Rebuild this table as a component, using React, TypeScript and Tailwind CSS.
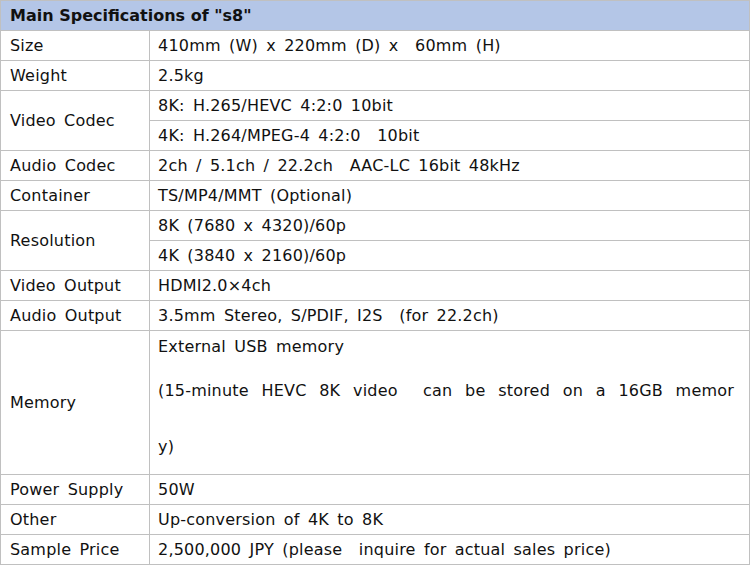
import React from "react";

type Spec = { label: string; values: React.ReactNode[] };

const specs: Spec[] = [
  { label: "Size", values: ["410mm (W) x 220mm (D) x  60mm (H)"] },
  { label: "Weight", values: ["2.5kg"] },
  {
    label: "Video Codec",
    values: ["8K: H.265/HEVC 4:2:0 10bit", "4K: H.264/MPEG-4 4:2:0  10bit"],
  },
  { label: "Audio Codec", values: ["2ch / 5.1ch / 22.2ch  AAC-LC 16bit 48kHz"] },
  { label: "Container", values: ["TS/MP4/MMT (Optional)"] },
  {
    label: "Resolution",
    values: ["8K (7680 x 4320)/60p", "4K (3840 x 2160)/60p"],
  },
  { label: "Video Output", values: ["HDMI2.0×4ch"] },
  { label: "Audio Output", values: ["3.5mm Stereo, S/PDIF, I2S  (for 22.2ch)"] },
];

const specsAfter: Spec[] = [
  { label: "Power Supply", values: ["50W"] },
  { label: "Other", values: ["Up-conversion of 4K to 8K"] },
  {
    label: "Sample Price",
    values: ["2,500,000 JPY (please  inquire for actual sales price)"],
  },
];

const Row = ({ spec }: { spec: Spec }) => (
  <div className="flex">
    <div className="w-[149px] shrink-0 flex items-center pl-[9px] border-r border-b border-[#c0c0c0]">
      {spec.label}
    </div>
    <div className="flex-1 flex flex-col">
      {spec.values.map((v, i) => (
        <div
          key={i}
          className="h-[30px] flex items-center pl-[8px] border-r border-b border-[#c0c0c0]"
        >
          {v}
        </div>
      ))}
    </div>
  </div>
);

export default function App() {
  return (
    <div className="bg-white w-[751px] h-[566px]">
      <div
        className="w-[750px] border-l border-t border-[#c0c0c0] text-[16px] text-[#111] whitespace-pre-wrap tracking-[0.2px] [word-spacing:3px]"
        style={{ fontFamily: '"DejaVu Sans", Verdana, sans-serif' }}
      >
        <div className="h-[30px] flex items-center pl-[9px] bg-[#b4c6e7] font-bold border-r border-b border-[#c0c0c0] tracking-normal [word-spacing:0px]">
          Main Specifications of "s8"
        </div>
        {specs.map((s) => (
          <Row key={s.label} spec={s} />
        ))}
        <div className="flex">
          <div className="w-[149px] shrink-0 flex items-center pl-[9px] border-r border-b border-[#c0c0c0]">
            Memory
          </div>
          <div className="flex-1 h-[144px] pl-[8px] pr-[15px] border-r border-b border-[#c0c0c0]">
            <p className="leading-[32px]">External USB memory</p>
            <p className="leading-[56px] text-justify [text-align-last:justify]">
              (15-minute HEVC 8K video  can be stored on a 16GB memor
            </p>
            <p className="leading-[56px]">y)</p>
          </div>
        </div>
        {specsAfter.map((s) => (
          <Row key={s.label} spec={s} />
        ))}
      </div>
    </div>
  );
}
